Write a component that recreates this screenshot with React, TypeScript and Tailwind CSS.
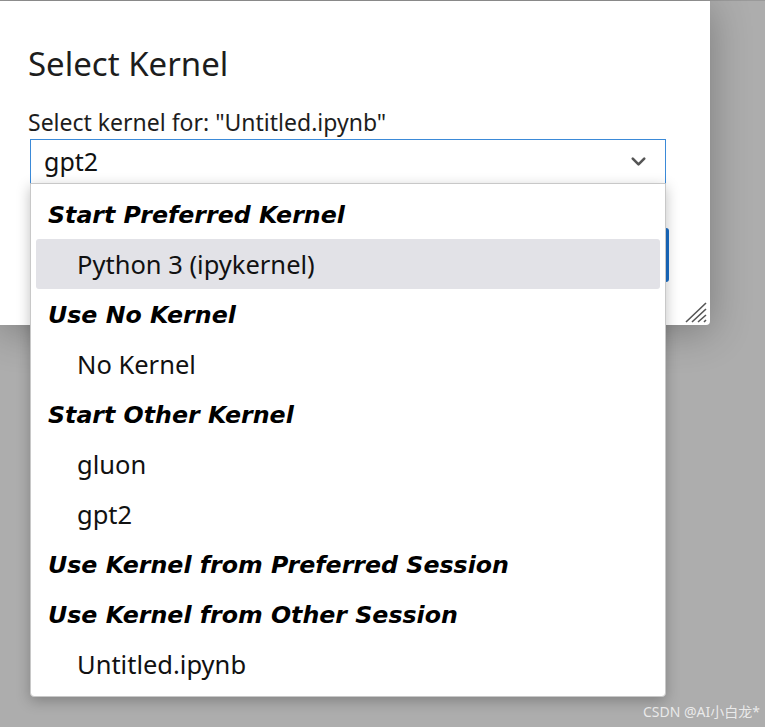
import React from 'react';
import { ChevronDown } from 'lucide-react';

type Entry = { label: string; group?: boolean; active?: boolean };

const entries: Entry[] = [
  { label: 'Start Preferred Kernel', group: true },
  { label: 'Python 3 (ipykernel)', active: true },
  { label: 'Use No Kernel', group: true },
  { label: 'No Kernel' },
  { label: 'Start Other Kernel', group: true },
  { label: 'gluon' },
  { label: 'gpt2' },
  { label: 'Use Kernel from Preferred Session', group: true },
  { label: 'Use Kernel from Other Session', group: true },
  { label: 'Untitled.ipynb' },
];

const uiFont = { fontFamily: '"Noto Sans", "Open Sans", sans-serif' };

function ResizeGrip() {
  return (
    <svg width="24" height="22" viewBox="0 0 24 22" className="text-[#555]">
      <path d="M2 21 L22 2 M8 21 L22 8 M14 21 L22 14 M20 21 L22 19" stroke="currentColor" strokeWidth="1.6" fill="none" />
    </svg>
  );
}

export default function App() {
  return (
    <div className="relative w-[765px] h-[727px] overflow-hidden bg-[#adadad]" style={uiFont}>
      <div className="border-t border-[#9a9a9a]" />
      {/* dialog */}
      <div className="relative w-[710px] h-[324px] bg-white rounded-br-sm shadow-[0_6px_40px_rgba(0,0,0,0.3)]">
        <div className="pl-[28px] pt-[40px]">
          <h2 className="text-[33px] leading-[46px] text-[#1d1d1d]">Select Kernel</h2>
          <div className="mt-[20px] text-[23px] leading-[30px] text-[#1d1d1d]">Select kernel for: "Untitled.ipynb"</div>
          <div className="ml-[2px] mt-[2px] w-[636px] h-[45px] border border-[#3b8ad8] flex items-center justify-between pl-[13px] pr-[15px]">
            <span className="text-[25px] text-[#111]">gpt2</span>
            <ChevronDown className="w-[23px] h-[23px] text-[#555]" strokeWidth={2.75} />
          </div>
          <div className="flex justify-end pr-[41px] mt-[44px]">
            <div className="w-[110px] h-[54px] rounded-[3px] bg-[#1a6fc9]" />
          </div>
        </div>
        <div className="absolute right-[2px] bottom-[2px]">
          <ResizeGrip />
        </div>
      </div>

      {/* dropdown menu */}
      <div className="absolute left-[30px] top-[183px] w-[636px] h-[514px] bg-white border border-[#c8c8c8] rounded-b-[4px] shadow-[0_4px_14px_rgba(0,0,0,0.25)] pt-[5px] px-[5px]">
        {entries.map((e) =>
          e.group ? (
            <div
              key={e.label}
              className="h-[50px] flex items-center pl-[12px] pt-[4px] text-[23.7px] font-bold italic text-black"
              style={{ fontFamily: '"DejaVu Sans", Verdana, sans-serif' }}
            >
              {e.label}
            </div>
          ) : (
            <div
              key={e.label}
              className={
                'h-[50px] flex items-center pl-[41px] pt-[1px] text-[25.5px] text-[#111] rounded-[3px] ' +
                (e.active ? 'bg-[#e2e2e7]' : '')
              }
            >
              {e.label}
            </div>
          )
        )}
      </div>

      <div
        className="absolute right-[5px] bottom-[5px] text-[14px] text-white/75"
        style={{ fontFamily: '"Noto Sans", "Noto Sans CJK SC", sans-serif' }}
      >
        CSDN @AI小白龙*
      </div>
    </div>
  );
}
